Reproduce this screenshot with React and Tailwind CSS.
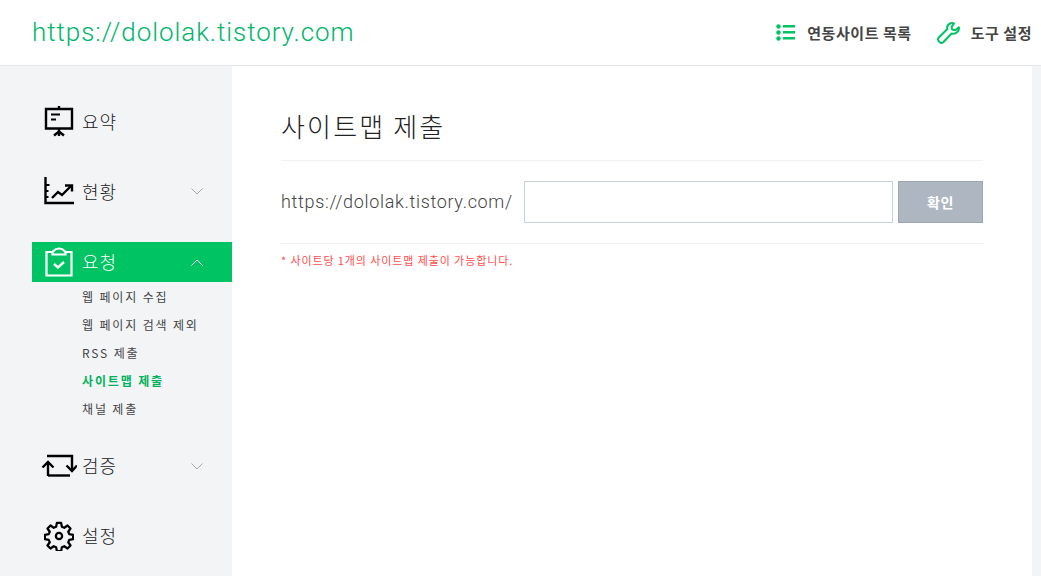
import React from "react";

function IconBoard() {
  return (
    <svg width="30" height="32" viewBox="0 0 30 32" fill="none" stroke="#000" strokeWidth="2.4">
      <path d="M2 4h26v19.500H2z" />
      <path d="M15 1v3M15 23.500V31" />
      <path d="M7 9.500h9M7 14.500h5" strokeWidth="2" />
      <path d="M10 30.500l5-4 5 4" />
    </svg>
  );
}
function IconChart() {
  return (
    <svg width="30" height="28" viewBox="0 0 30 28" fill="none" stroke="#000" strokeWidth="2.4">
      <path d="M1.500 0v26h28.500" />
      <path d="M1.500 8h4M1.500 14h3M1.500 20h3" strokeWidth="2" />
      <path d="M8 21l6-6 4 3 9-9" />
      <path d="M21 8.500h7v6" />
    </svg>
  );
}
function IconClip() {
  return (
    <svg width="28" height="30" viewBox="0 0 28 30" fill="none" stroke="#fff" strokeWidth="2.200">
      <path d="M8 5H1.500v23.500h25V5H20" />
      <path d="M7.500 7.500V5C9 3.500 10 1.500 14 1.500S19 3.500 20.500 5v2.500z" />
      <path d="M9 17l4 3.500 6-5.500" strokeWidth="2.400" />
    </svg>
  );
}
function IconSwap() {
  return (
    <svg width="36" height="24" viewBox="0 0 36 24" fill="none" stroke="#000" strokeWidth="2.400">
      <path d="M7 22V9" />
      <path d="M1.500 13.500L7 8l5.500 5.500" />
      <path d="M7 21.500h22" />
      <path d="M6 2h25v14" />
      <path d="M25.500 11.500L31 17l5-5.500" />
    </svg>
  );
}
function IconGear() {
  return (
    <svg width="30" height="30" viewBox="0 0 24 24" fill="none" stroke="#000" strokeWidth="1.800" strokeLinejoin="round">
      <path d="M10.300 1.500h3.400l.6 3.100 1.900.8 2.600-1.800 2.400 2.400-1.800 2.600.8 1.900 3.100.6v3.400l-3.100.6-.8 1.900 1.800 2.600-2.400 2.400-2.600-1.800-1.900.8-.6 3.100h-3.400l-.6-3.100-1.900-.8-2.600 1.800-2.400-2.400 1.800-2.600-.8-1.900-3.100-.6v-3.400l3.100-.6.8-1.900-1.800-2.600 2.400-2.400 2.600 1.800 1.900-.8z" />
      <circle cx="12" cy="12" r="2.500" />
    </svg>
  );
}
function Chevron({ up, color }) {
  return (
    <svg width="12" height="7" viewBox="0 0 12 7" fill="none" stroke={color} strokeWidth="1" className="ml-auto mr-[29px]">
      {up ? <path d="M.5 6.500L6 1l5.500 5.500" /> : <path d="M.5.500L6 6l5.500-5.500" />}
    </svg>
  );
}
function IconList() {
  return (
    <svg width="19" height="17" viewBox="0 0 19 17" fill="#00c364">
      <circle cx="2.500" cy="2.500" r="2.200" />
      <circle cx="2.500" cy="8.500" r="2.200" />
      <circle cx="2.500" cy="14.500" r="2.200" />
      <rect x="7" y="1" width="12" height="2.500" />
      <rect x="7" y="7" width="12" height="2.500" />
      <rect x="7" y="13" width="12" height="2.500" />
    </svg>
  );
}
function IconWrench() {
  return (
    <svg width="23" height="22" viewBox="0 0 23 22" fill="none" stroke="#00c364" strokeWidth="2" strokeLinejoin="round">
      <path d="M13 1.500c-2 1-3.200 3.200-2.600 5.500L1.800 15.500c-1 1-1 2.300-.2 3.400l1.200 1.300c1 .9 2.400.9 3.400 0l8.500-8.700c3.300.9 6.500-1.200 7.300-4.500l-.2-1.800-3.600 3.100-3-.8-.6-2.600L17 1.500c-1.300-.6-2.800-.6-4 0z" />
    </svg>
  );
}

function NavItem({ icon, label, chevron, active, className, textClass }) {
  return (
    <div className={"ml-8 h-10 flex items-center " + (active ? "bg-[#00c364] " : "") + (className || "")}>
      <div className="w-[50px] flex justify-center shrink-0 pl-[3px]">{icon}</div>
      <span className={"text-[18px] leading-none font-light tracking-[1px] " + (active ? "text-white " : "text-[#222] ") + (textClass || "")}>{label}</span>
      {chevron}
    </div>
  );
}

function SubItem({ children, active }) {
  return (
    <div className={"h-7 flex items-center text-[12px] tracking-[1.85px] " + (active ? "font-bold text-[#00b25c]" : "text-[#444]")}>
      {children}
    </div>
  );
}

export default function App() {
  return (
    <div className="w-[1041px] h-[576px] overflow-hidden bg-white flex flex-col font-['Noto_Sans_CJK_KR',sans-serif]">
      <header className="h-[66px] shrink-0 border-b border-[#e6e7ea] flex items-center pl-8 pr-[9px]">
        <div className="text-[26px] leading-none text-[#00b56a] font-light tracking-[0.93px] font-['Roboto',sans-serif] -mt-[1px]">https://dololak.tistory.com</div>
        <div className="ml-auto flex items-center">
          <IconList />
          <span className="ml-[12px] text-[15px] leading-none font-bold text-[#444] tracking-[0.55px]">연동사이트 목록</span>
          <div className="ml-[25px]"><IconWrench /></div>
          <span className="ml-[11px] text-[15px] leading-none font-bold text-[#444] tracking-[0.55px]">도구 설정</span>
        </div>
      </header>
      <div className="flex flex-1 min-h-0">
        <aside className="w-[232px] shrink-0 bg-[#f3f4f6] pt-[35px]">
          <NavItem icon={<IconBoard />} label="요약" />
          <NavItem className="mt-[30px]" icon={<IconChart />} label="현황" chevron={<Chevron color="#aaa" />} />
          <NavItem className="mt-[31px]" active textClass="-mt-[2px]" icon={<IconClip />} label="요청" chevron={<Chevron up color="#fff" />} />
          <div className="pl-[82px] mt-[1px]">
            <SubItem>웹 페이지 수집</SubItem>
            <SubItem>웹 페이지 검색 제외</SubItem>
            <SubItem>RSS 제출</SubItem>
            <SubItem active>사이트맵 제출</SubItem>
            <SubItem>채널 제출</SubItem>
          </div>
          <NavItem className="mt-[23px]" textClass="-mt-[2px]" icon={<IconSwap />} label="검증" chevron={<Chevron color="#aaa" />} />
          <NavItem className="mt-[30px]" textClass="-mt-[2px]" icon={<IconGear />} label="설정" />
        </aside>
        <main className="w-[800px] shrink-0 pl-[49px] pr-[49px]">
          <h1 className="h-[95px] border-b border-[#f0f1f3] pt-[44px] text-[26px] leading-[32px] font-light text-[#222] tracking-[2.15px]">사이트맵 제출</h1>
          <div className="h-[83px] border-b border-[#f0f1f3] flex items-center">
            <span className="-mt-[2px] text-[18px] text-[#444] font-light font-['Roboto',sans-serif] tracking-[0.67px] whitespace-nowrap">https://dololak.tistory.com/</span>
            <input className="ml-auto w-[369px] h-[42px] border border-[#c8d0da] bg-white outline-none" />
            <button className="ml-[5px] w-[85px] h-[42px] border border-[#9ba6b2] bg-[#aeb7c1] text-white text-[14px] tracking-[0.5px] font-bold">확인</button>
          </div>
          <p className="mt-[9px] text-[11px] leading-[14px] text-[#ff4d4d] tracking-[0.9px]">* 사이트당 1개의 사이트맵 제출이 가능합니다.</p>
        </main>
        <div className="flex-1 bg-[#f3f4f6]" />
      </div>
    </div>
  );
}
